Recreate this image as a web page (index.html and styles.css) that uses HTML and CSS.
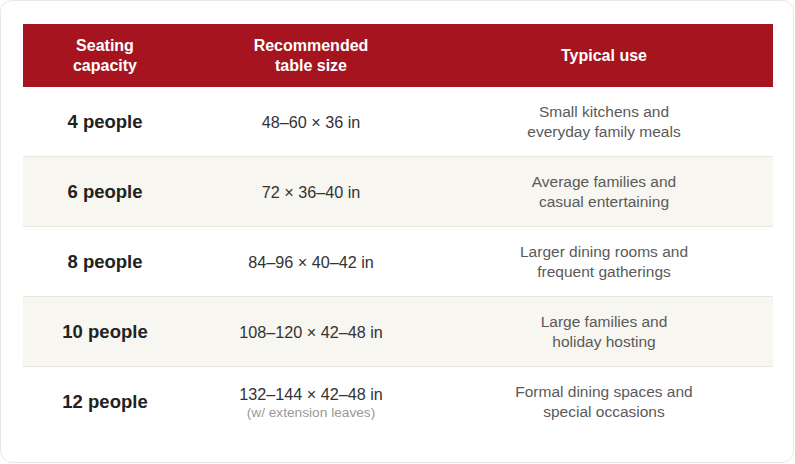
FILE: index.html
```html
<!DOCTYPE html>
<html lang="en">
<head>
<meta charset="utf-8">
<title>Table sizes by seating capacity</title>
<link rel="stylesheet" href="styles.css">
</head>
<body>
<div class="card">
  <table class="sizes">
    <colgroup>
      <col class="c1"><col class="c2"><col class="c3">
    </colgroup>
    <thead>
      <tr>
        <th>Seating<br>capacity</th>
        <th>Recommended<br>table size</th>
        <th>Typical use</th>
      </tr>
    </thead>
    <tbody>
      <tr>
        <td class="cap">4 people</td>
        <td class="size">48–60 × 36 in</td>
        <td class="use">Small kitchens and<br>everyday family meals</td>
      </tr>
      <tr class="alt">
        <td class="cap">6 people</td>
        <td class="size">72 × 36–40 in</td>
        <td class="use">Average families and<br>casual entertaining</td>
      </tr>
      <tr>
        <td class="cap">8 people</td>
        <td class="size">84–96 × 40–42 in</td>
        <td class="use">Larger dining rooms and<br>frequent gatherings</td>
      </tr>
      <tr class="alt">
        <td class="cap">10 people</td>
        <td class="size">108–120 × 42–48 in</td>
        <td class="use">Large families and<br>holiday hosting</td>
      </tr>
      <tr class="last">
        <td class="cap">12 people</td>
        <td class="size">132–144 × 42–48 in<span class="note">(w/ extension leaves)</span></td>
        <td class="use">Formal dining spaces and<br>special occasions</td>
      </tr>
    </tbody>
  </table>
</div>
</body>
</html>
```

FILE: styles.css
```css
html, body {
  margin: 0;
  padding: 0;
  background: #ffffff;
}

body {
  font-family: "Liberation Sans", Arial, sans-serif;
}

.card {
  box-sizing: border-box;
  width: 794px;
  height: 463px;
  border: 1px solid #ebe8e0;
  border-radius: 12px;
  background: #ffffff;
  padding: 23px 20px 0 22px;
}

.sizes {
  width: 750px;
  border-collapse: collapse;
  table-layout: fixed;
}

.c1 { width: 164px; }
.c2 { width: 248px; }
.c3 { width: 338px; }

.sizes th {
  background: #a6151f;
  color: #ffffff;
  font-weight: bold;
  font-size: 16px;
  line-height: 20px;
  padding: 12px 10px 11px;
  text-align: center;
  vertical-align: middle;
}

.sizes td {
  height: 40px;
  padding: 15px 10px 14px;
  text-align: center;
  vertical-align: middle;
  border-bottom: 1px solid #ebe7de;
}

.sizes tr.alt td {
  background: #f8f6f0;
}

.sizes tr.last td {
  border-bottom: none;
}

.cap {
  font-weight: bold;
  font-size: 18.5px;
  color: #222222;
}

.size {
  font-size: 16.2px;
  line-height: 20px;
  color: #333333;
}

.note {
  display: block;
  font-size: 13.7px;
  line-height: 17px;
  color: #999999;
}

.use {
  font-size: 15.5px;
  line-height: 20px;
  color: #5a5a5a;
}
```
